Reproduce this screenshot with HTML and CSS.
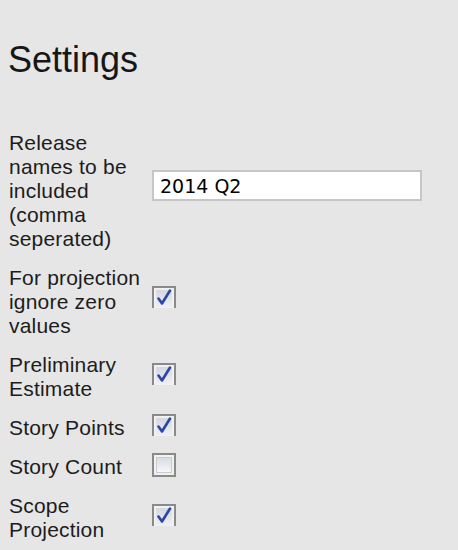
FILE: index.html
```html
<!DOCTYPE html>
<html>
<head>
<meta charset="utf-8">
<link rel="stylesheet" href="styles.css">
</head>
<body>
<h1 class="title">Settings</h1>
<div class="form">
  <div class="label">Release names to be included (comma seperated)</div>
  <div class="control"><input class="text-input" type="text" value="2014 Q2"></div>

  <div class="label">For projection ignore zero values</div>
  <div class="control"><span class="cb cb-up"><svg width="24" height="22" viewBox="0 0 24 22"><defs><linearGradient id="g1" x1="0" y1="0" x2="0" y2="1"><stop offset="0" stop-color="#d3d7e0"/><stop offset="1" stop-color="#f3f4f7"/></linearGradient></defs><rect x="0" y="0" width="24" height="24" fill="#8a8a8a"/><rect x="2" y="2" width="20" height="22" fill="#f1f1f1"/><rect x="4" y="4" width="16" height="20" fill="url(#g1)"/><path d="M6.5 12.5 L10 17.5 L18 4.5" fill="none" stroke="#2b46a6" stroke-width="2.6" stroke-linecap="round" stroke-linejoin="round"/></svg></span></div>

  <div class="label">Preliminary Estimate</div>
  <div class="control"><span class="cb"><svg width="24" height="22" viewBox="0 0 24 22"><rect x="0" y="0" width="24" height="24" fill="#8a8a8a"/><rect x="2" y="2" width="20" height="22" fill="#f1f1f1"/><rect x="4" y="4" width="16" height="20" fill="url(#g1)"/><path d="M6.5 12.5 L10 17.5 L18 4.5" fill="none" stroke="#2b46a6" stroke-width="2.6" stroke-linecap="round" stroke-linejoin="round"/></svg></span></div>

  <div class="label">Story Points</div>
  <div class="control"><span class="cb"><svg width="24" height="22" viewBox="0 0 24 22"><rect x="0" y="0" width="24" height="24" fill="#8a8a8a"/><rect x="2" y="2" width="20" height="22" fill="#f1f1f1"/><rect x="4" y="4" width="16" height="20" fill="url(#g1)"/><path d="M6.5 12.5 L10 17.5 L18 4.5" fill="none" stroke="#2b46a6" stroke-width="2.6" stroke-linecap="round" stroke-linejoin="round"/></svg></span></div>

  <div class="label">Story Count</div>
  <div class="control"><span class="cb"><svg width="24" height="24" viewBox="0 0 24 24"><defs><linearGradient id="g2" x1="0" y1="0" x2="0" y2="1"><stop offset="0" stop-color="#d9dce4"/><stop offset="1" stop-color="#f6f7f9"/></linearGradient></defs><rect x="0" y="0" width="24" height="24" fill="#8a8a8a"/><rect x="2" y="2" width="20" height="20" fill="#f1f1f1"/><rect x="4.5" y="4.5" width="15" height="15" fill="url(#g2)" stroke="#c9ccd3" stroke-width="1"/></svg></span></div>

  <div class="label">Scope Projection</div>
  <div class="control"><span class="cb"><svg width="24" height="22" viewBox="0 0 24 22"><rect x="0" y="0" width="24" height="24" fill="#8a8a8a"/><rect x="2" y="2" width="20" height="22" fill="#f1f1f1"/><rect x="4" y="4" width="16" height="20" fill="url(#g1)"/><path d="M6.5 12.5 L10 17.5 L18 4.5" fill="none" stroke="#2b46a6" stroke-width="2.6" stroke-linecap="round" stroke-linejoin="round"/></svg></span></div>
</div>
</body>
</html>
```

FILE: styles.css
```css
html, body {
  background: #e6e6e6;
}
body {
  margin: 0;
  padding: 0 8px 8px 8px;
  font-family: "Liberation Sans", Arial, sans-serif;
  color: #1c1c1c;
}
.title {
  margin: 40px 0 0 0;
  font-size: 36px;
  line-height: 40px;
  font-weight: normal;
  color: #161616;
}
.form {
  margin-top: 51px;
  display: grid;
  grid-template-columns: 138px 1fr;
  column-gap: 6px;
  row-gap: 15px;
  align-items: center;
}
.label {
  font-size: 21px;
  line-height: 24px;
  padding-left: 1px;
  letter-spacing: 0.2px;
}
.control {
  display: flex;
  align-items: center;
}
.text-input {
  box-sizing: border-box;
  width: 270px;
  height: 31px;
  margin: 0 0 11px 0;
  border: 2px solid #c6c6c6;
  background: #fff;
  padding: 0 6px;
  font-family: "DejaVu Sans", sans-serif;
  font-size: 19px;
  color: #000;
  outline: none;
}
.cb {
  display: block;
  width: 24px;
  height: 24px;
  margin: -2px 0 2px 0;
}
.cb svg {
  display: block;
}
.cb-up {
  margin: -4px 0 4px 0;
}
```
